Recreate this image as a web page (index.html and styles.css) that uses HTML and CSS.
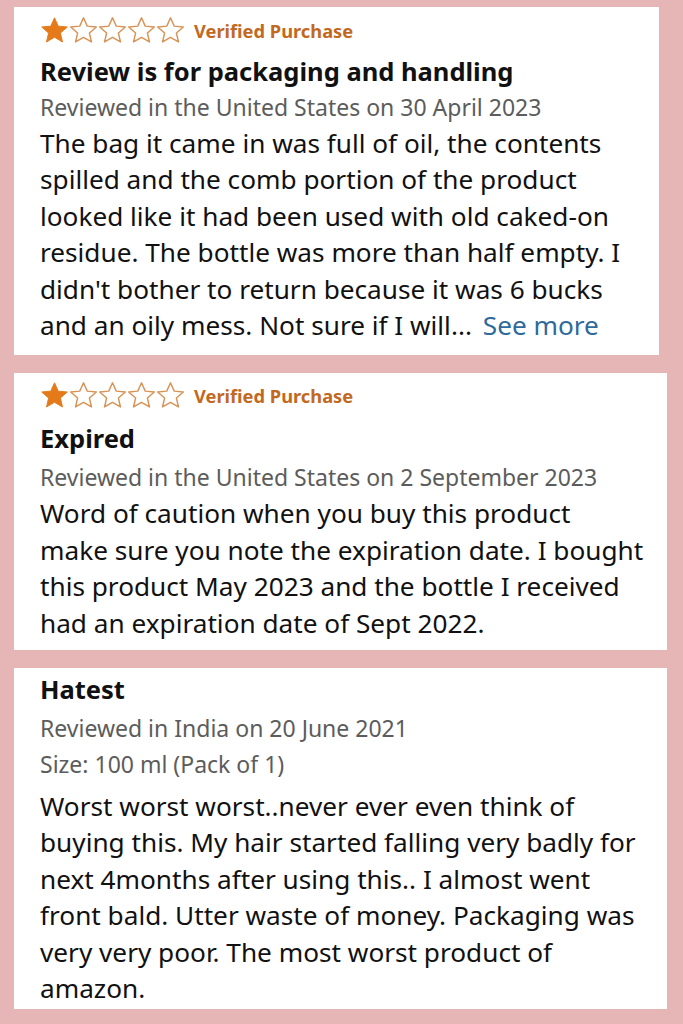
FILE: index.html
```html
<!DOCTYPE html>
<html lang="en">
<head>
<meta charset="utf-8">
<title>Reviews</title>
<link rel="stylesheet" href="styles.css">
</head>
<body>
<main class="reviews">
  <section class="card card--one">
    <div class="rating">
      <span class="stars">
        <svg class="star" viewBox="0 0 24 24"><path class="star-fill" d="M12 1.5l3.1 6.9 7.5.7-5.7 5 1.7 7.4L12 17.6l-6.6 3.9 1.7-7.4-5.7-5 7.5-.7z"/></svg>
        <svg class="star" viewBox="0 0 24 24"><path class="star-line" d="M12 1.5l3.1 6.9 7.5.7-5.7 5 1.7 7.4L12 17.6l-6.6 3.9 1.7-7.4-5.7-5 7.5-.7z"/></svg>
        <svg class="star" viewBox="0 0 24 24"><path class="star-line" d="M12 1.5l3.1 6.9 7.5.7-5.7 5 1.7 7.4L12 17.6l-6.6 3.9 1.7-7.4-5.7-5 7.5-.7z"/></svg>
        <svg class="star" viewBox="0 0 24 24"><path class="star-line" d="M12 1.5l3.1 6.9 7.5.7-5.7 5 1.7 7.4L12 17.6l-6.6 3.9 1.7-7.4-5.7-5 7.5-.7z"/></svg>
        <svg class="star" viewBox="0 0 24 24"><path class="star-line" d="M12 1.5l3.1 6.9 7.5.7-5.7 5 1.7 7.4L12 17.6l-6.6 3.9 1.7-7.4-5.7-5 7.5-.7z"/></svg>
      </span>
      <span class="verified">Verified Purchase</span>
    </div>
    <h2 class="title">Review is for packaging and handling</h2>
    <p class="meta">Reviewed in the United States on 30 April 2023</p>
    <p class="body">The bag it came in was full of oil, the contents<br>spilled and the comb portion of the product<br>looked like it had been used with old caked-on<br>residue. The bottle was more than half empty. I<br>didn't bother to return because it was 6 bucks<br>and an oily mess. Not sure if I will... <a class="more" href="#">See more</a></p>
  </section>

  <section class="card card--two">
    <div class="rating">
      <span class="stars">
        <svg class="star" viewBox="0 0 24 24"><path class="star-fill" d="M12 1.5l3.1 6.9 7.5.7-5.7 5 1.7 7.4L12 17.6l-6.6 3.9 1.7-7.4-5.7-5 7.5-.7z"/></svg>
        <svg class="star" viewBox="0 0 24 24"><path class="star-line" d="M12 1.5l3.1 6.9 7.5.7-5.7 5 1.7 7.4L12 17.6l-6.6 3.9 1.7-7.4-5.7-5 7.5-.7z"/></svg>
        <svg class="star" viewBox="0 0 24 24"><path class="star-line" d="M12 1.5l3.1 6.9 7.5.7-5.7 5 1.7 7.4L12 17.6l-6.6 3.9 1.7-7.4-5.7-5 7.5-.7z"/></svg>
        <svg class="star" viewBox="0 0 24 24"><path class="star-line" d="M12 1.5l3.1 6.9 7.5.7-5.7 5 1.7 7.4L12 17.6l-6.6 3.9 1.7-7.4-5.7-5 7.5-.7z"/></svg>
        <svg class="star" viewBox="0 0 24 24"><path class="star-line" d="M12 1.5l3.1 6.9 7.5.7-5.7 5 1.7 7.4L12 17.6l-6.6 3.9 1.7-7.4-5.7-5 7.5-.7z"/></svg>
      </span>
      <span class="verified">Verified Purchase</span>
    </div>
    <h2 class="title">Expired</h2>
    <p class="meta">Reviewed in the United States on 2 September 2023</p>
    <p class="body">Word of caution when you buy this product<br>make sure you note the expiration date. I bought<br>this product May 2023 and the bottle I received<br>had an expiration date of Sept 2022.</p>
  </section>

  <section class="card card--three">
    <h2 class="title">Hatest</h2>
    <p class="meta">Reviewed in India on 20 June 2021</p>
    <p class="meta">Size: 100 ml (Pack of 1)</p>
    <p class="body">Worst worst worst..never ever even think of<br>buying this. My hair started falling very badly for<br>next 4months after using this.. I almost went<br>front bald. Utter waste of money. Packaging was<br>very very poor. The most worst product of<br>amazon.</p>
  </section>
</main>
</body>
</html>
```

FILE: styles.css
```css
* { box-sizing: border-box; }

html, body {
  margin: 0;
  padding: 0;
}

body {
  background: #e6b6b7;
  font-family: "Noto Sans", "Open Sans", "Liberation Sans", sans-serif;
  color: #111111;
}

.reviews {
  display: flex;
  flex-direction: column;
  gap: 18px;
  padding: 7px 0 16px 14px;
}

.card {
  background: #ffffff;
  padding-left: 26px;
  width: 653px;
}

.card--one {
  width: 645px;
  padding-top: 8px;
  padding-bottom: 12px;
}

.card--two {
  padding-top: 7px;
  padding-bottom: 9px;
}

.card--three {
  padding-top: 3px;
  padding-bottom: 2px;
}

.rating {
  display: flex;
  align-items: center;
  gap: 9px;
  height: 30px;
}

.stars {
  display: flex;
  gap: 0;
}

.star {
  width: 29px;
  height: 29px;
  display: block;
}

.star-fill {
  fill: #e47a1a;
  stroke: #e47a1a;
  stroke-width: 0.8;
  stroke-linejoin: round;
}

.star-line {
  fill: none;
  stroke: #d99356;
  stroke-width: 1.2;
  stroke-linejoin: round;
}

.verified {
  font-size: 18.3px;
  font-weight: 700;
  color: #c2691f;
}

.title {
  margin: 0;
  font-size: 25.5px;
  font-weight: 700;
  line-height: 36px;
  color: #111111;
}

.card--one .title { margin-top: 8px; }
.card--two .title { margin-top: 10px; }

.meta {
  margin: 0;
  font-size: 23px;
  line-height: 36px;
  color: #5c5c5c;
}

.card--two .meta,
.card--three .title + .meta { margin-top: 3px; }

.body {
  margin: 0;
  font-size: 26.2px;
  line-height: 36.4px;
  color: #111111;
}

.card--three .body { margin-top: 6px; }

.more {
  color: #2f6a9c;
  text-decoration: none;
  margin-left: 4px;
}
```
